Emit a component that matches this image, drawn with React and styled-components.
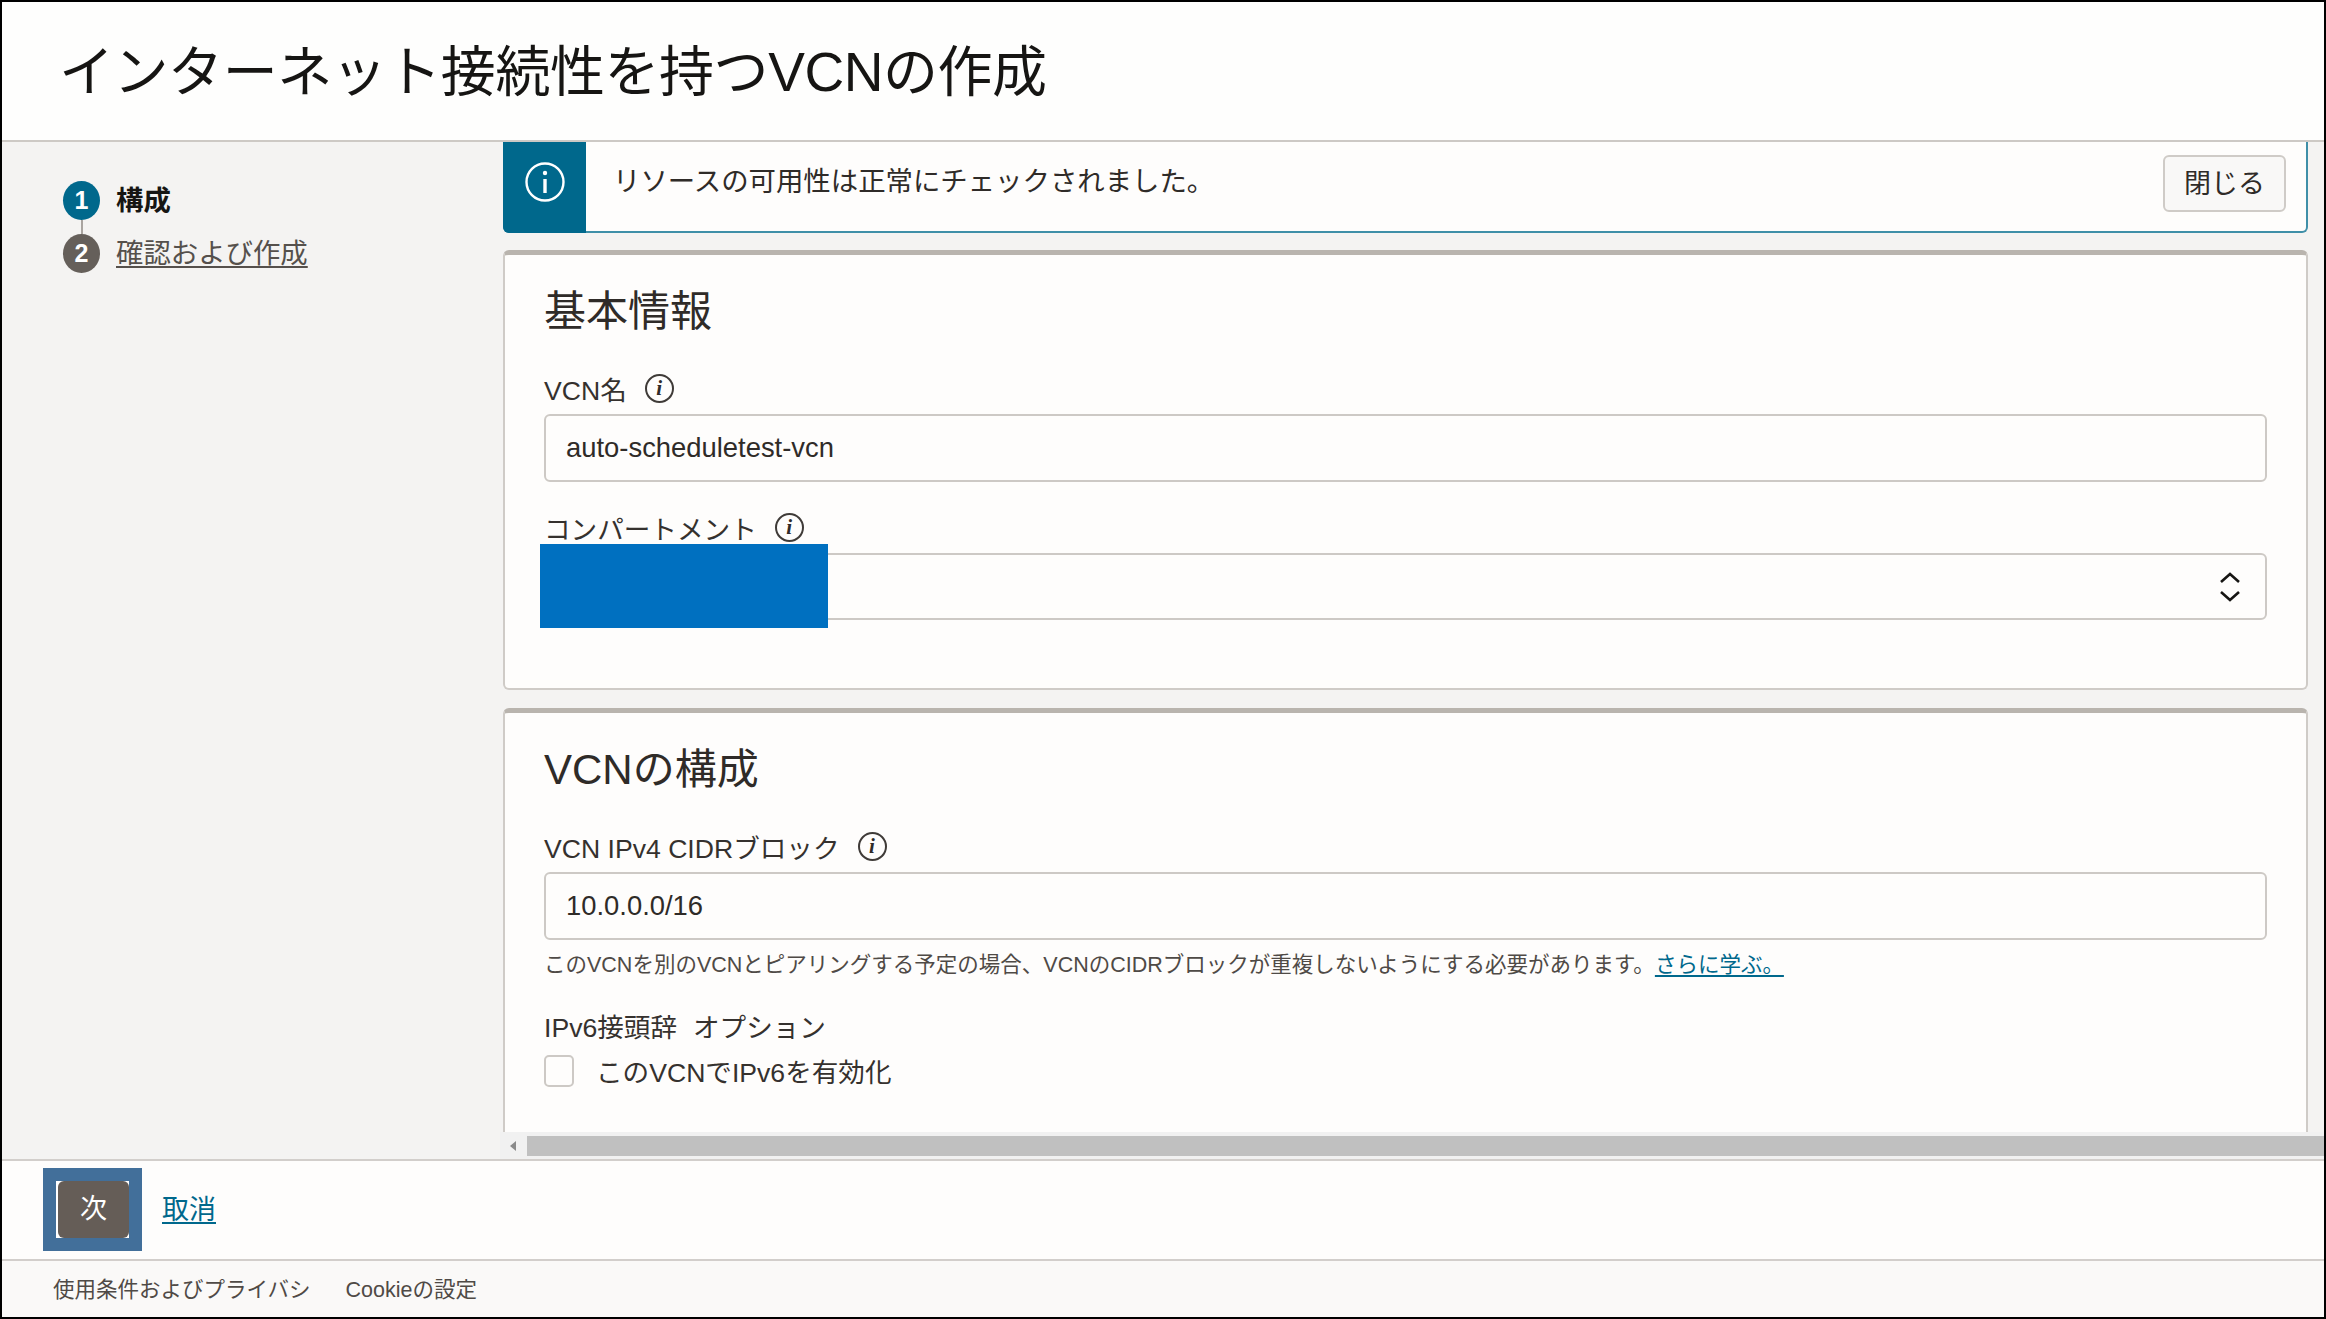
import React from "react";
import styled, { createGlobalStyle } from "styled-components";

const GlobalStyle = createGlobalStyle`
  * { box-sizing: border-box; }
  html, body { margin: 0; padding: 0; background: #000; }
  body {
    font-family: "Liberation Sans", "Noto Sans CJK JP", sans-serif;
    color: #2f2b28;
  }
`;

const Frame = styled.div`
  display: flex;
  flex-direction: column;
  width: 2326px;
  height: 1319px;
  border: 2px solid #000;
  background: #f4f3f2;
  overflow: hidden;
`;

const Header = styled.header`
  flex: none;
  display: flex;
  align-items: center;
  height: 140px;
  padding: 0 0 8px 57px;
  background: #fefefd;
  border-bottom: 2px solid #cdc9c5;
`;

const Title = styled.h1`
  margin: 0;
  font-size: 55px;
  font-weight: 400;
  color: #161513;
  letter-spacing: -0.45px;
`;

const Body = styled.div`
  flex: 1;
  min-height: 0;
  display: flex;
`;

const Sidebar = styled.nav`
  flex: none;
  width: 498px;
  padding: 39px 0 0 61px;
`;

const Step = styled.div`
  display: flex;
  align-items: center;
  gap: 16px;
  height: 39px;
`;

const StepNumber = styled.span`
  display: flex;
  align-items: center;
  justify-content: center;
  width: 37px;
  height: 39px;
  border-radius: 50%;
  font-size: 25px;
  font-weight: 700;
  color: #fff;
  background: ${(props) => (props.$active ? "#00688c" : "#655f5a")};
`;

const StepLabel = styled.a`
  margin-top: -5px;
  font-size: 27.4px;
  font-weight: ${(props) => (props.$active ? 700 : 400)};
  color: ${(props) => (props.$active ? "#161513" : "#55504c")};
  text-decoration: ${(props) => (props.$active ? "none" : "underline")};
  text-underline-offset: 3px;
`;

const StepLine = styled.div`
  width: 2px;
  height: 14px;
  margin-left: 18px;
  background: #a9a4a0;
`;

const Main = styled.main`
  flex: 1;
  min-width: 0;
  display: flex;
  flex-direction: column;
`;

const Scroller = styled.div`
  flex: 1;
  min-height: 0;
  display: flex;
  flex-direction: column;
  gap: 18px;
  padding: 0 16px 0 3px;
  overflow: hidden;
`;

const Notice = styled.div`
  flex: none;
  display: flex;
  align-items: stretch;
  height: 91px;
  margin-bottom: -1px;
  background: #fefdfc;
  border: 2px solid #3f8fa8;
  border-top: 0;
  border-radius: 0 0 6px 6px;
`;

const NoticeIcon = styled.div`
  flex: none;
  display: flex;
  align-items: flex-start;
  justify-content: center;
  width: 83px;
  margin: 0 0 -2px -2px;
  padding-top: 19px;
  background: #00688c;
  border-radius: 0 0 0 6px;
`;

const NoticeText = styled.div`
  flex: 1;
  padding: 21px 0 0 27px;
  font-size: 27.4px;
  line-height: 38px;
  color: #2f2b28;
`;

const CloseButton = styled.button`
  flex: none;
  width: 123px;
  height: 57px;
  margin: 13px 20px 0 0;
  padding: 0 0 5px;
  font: inherit;
  font-size: 27px;
  color: #2f2b28;
  background: #f9f8f7;
  border: 2px solid #cfcbc7;
  border-radius: 6px;
`;

const Card = styled.section`
  flex: none;
  padding: 27px 39px 68px;
  background: #fefdfc;
  border: 2px solid #cfcbc7;
  border-top: 5px solid #b9b4ae;
  border-radius: 6px;
`;

const CardTitle = styled.h2`
  margin: 0 0 28px;
  font-size: 42px;
  font-weight: 400;
  line-height: 60px;
  color: #2f2b28;
`;

const Label = styled.div`
  display: flex;
  align-items: center;
  gap: 18px;
  height: 36px;
  margin-bottom: 8px;
  font-size: 26.6px;
  color: #35312e;
`;

const Optional = styled.span`
  margin-left: -2px;
`;

const InfoBadge = styled.span`
  display: inline-flex;
  align-items: center;
  justify-content: center;
  width: 29px;
  height: 29px;
  border: 2px solid #3f3b38;
  border-radius: 50%;
  font-family: "Liberation Serif", serif;
  font-size: 21px;
  font-style: italic;
  font-weight: 700;
  color: #2f2b28;
`;

const TextInput = styled.input`
  display: block;
  width: 100%;
  height: 68px;
  margin-bottom: ${(props) => props.$gap || 0}px;
  padding: 0 20px;
  font-family: inherit;
  font-size: 27.4px;
  color: #2f2b28;
  background: #fefdfc;
  border: 2px solid #cdc9c5;
  border-radius: 6px;
  outline: none;
`;

const SelectField = styled.div`
  position: relative;
  display: flex;
  align-items: center;
  justify-content: flex-end;
  height: 67px;
  padding-right: 24px;
  border: 2px solid #cdc9c5;
  border-radius: 6px;
`;

const Redaction = styled.div`
  position: absolute;
  top: -11px;
  left: -6px;
  width: 288px;
  height: 84px;
  background: #0070c0;
`;

const Help = styled.p`
  margin: 8px 0 25px;
  font-size: 21.5px;
  line-height: 34px;
  color: #4f4a46;
`;

const TextLink = styled.a`
  color: #00688c;
  text-decoration: underline;
  text-underline-offset: 3px;
`;

const CheckRow = styled.label`
  display: flex;
  align-items: center;
  gap: 22px;
  margin-top: 7px;
  font-size: 26.6px;
  color: #35312e;
`;

const CheckBox = styled.input`
  appearance: none;
  flex: none;
  width: 30px;
  height: 32px;
  margin: 0;
  background: #fefdfc;
  border: 2px solid #cdc9c5;
  border-radius: 5px;
`;

const ScrollTrack = styled.div`
  flex: none;
  display: flex;
  align-items: center;
  gap: 11px;
  height: 27px;
  padding: 1px 0 0 10px;
  background: #f1f1f1;
`;

const ScrollArrow = styled.span`
  flex: none;
  width: 0;
  height: 0;
  border-top: 5px solid transparent;
  border-bottom: 5px solid transparent;
  border-right: 6px solid #8a8a8a;
`;

const ScrollThumb = styled.div`
  flex: 1;
  height: 20px;
  background: #c0c0c0;
`;

const ActionBar = styled.div`
  flex: none;
  display: flex;
  align-items: center;
  gap: 20px;
  height: 102px;
  padding: 0 0 2px 41px;
  background: #fefdfc;
  border-top: 2px solid #d2cecb;
  border-bottom: 2px solid #d2cecb;
`;

const FocusRing = styled.div`
  display: flex;
  align-items: center;
  justify-content: center;
  width: 99px;
  height: 83px;
  background: #426f9a;
`;

const NextCorners = styled.div`
  display: flex;
  width: 73px;
  height: 57px;
  padding-left: 2px;
  background: #fff;
`;

const NextButton = styled.button`
  flex: 1;
  padding: 0 0 5px;
  font: inherit;
  font-size: 27px;
  color: #fff;
  background: #655d57;
  border: 0;
  border-radius: 6px;
`;

const CancelLink = styled(TextLink)`
  margin-bottom: 4px;
  font-size: 27px;
`;

const LegalBar = styled.footer`
  flex: none;
  display: flex;
  align-items: center;
  gap: 35px;
  height: 56px;
  padding: 0 0 3px 51px;
  font-size: 21.5px;
  color: #4f4a46;
  background: #faf9f8;
`;

const InfoIcon = () => (
  <svg width="42" height="42" viewBox="0 0 42 42" fill="none" stroke="#fff">
    <circle cx="21" cy="21" r="18.5" strokeWidth="2.4" />
    <path d="M21 18v14" strokeWidth="3.4" />
    <circle cx="21" cy="12" r="2.2" fill="#fff" stroke="none" />
  </svg>
);

const UpDownIcon = () => (
  <svg width="22" height="30" viewBox="0 0 22 30" fill="none" stroke="#161513" strokeWidth="2.6">
    <path d="M2 10l9-8 9 8" />
    <path d="M2 20l9 8 9-8" />
  </svg>
);

const App = () => {
  return (
    <>
      <GlobalStyle />
      <Frame>
        <Header>
          <Title>インターネット接続性を持つVCNの作成</Title>
        </Header>
        <Body>
          <Sidebar>
            <Step>
              <StepNumber $active>1</StepNumber>
              <StepLabel $active>構成</StepLabel>
            </Step>
            <StepLine />
            <Step>
              <StepNumber>2</StepNumber>
              <StepLabel href="#">確認および作成</StepLabel>
            </Step>
          </Sidebar>
          <Main>
            <Scroller>
              <Notice>
                <NoticeIcon>
                  <InfoIcon />
                </NoticeIcon>
                <NoticeText>リソースの可用性は正常にチェックされました。</NoticeText>
                <CloseButton>閉じる</CloseButton>
              </Notice>
              <Card>
                <CardTitle>基本情報</CardTitle>
                <Label>
                  VCN名 <InfoBadge>i</InfoBadge>
                </Label>
                <TextInput defaultValue="auto-scheduletest-vcn" $gap={27} />
                <Label>
                  コンパートメント <InfoBadge>i</InfoBadge>
                </Label>
                <SelectField>
                  <Redaction />
                  <UpDownIcon />
                </SelectField>
              </Card>
              <Card>
                <CardTitle>VCNの構成</CardTitle>
                <Label>
                  VCN IPv4 CIDRブロック <InfoBadge>i</InfoBadge>
                </Label>
                <TextInput defaultValue="10.0.0.0/16" />
                <Help>
                  このVCNを別のVCNとピアリングする予定の場合、VCNのCIDRブロックが重複しないようにする必要があります。
                  <TextLink href="#">さらに学ぶ。</TextLink>
                </Help>
                <Label>
                  IPv6接頭辞 <Optional>オプション</Optional>
                </Label>
                <CheckRow>
                  <CheckBox type="checkbox" />
                  このVCNでIPv6を有効化
                </CheckRow>
              </Card>
            </Scroller>
            <ScrollTrack>
              <ScrollArrow />
              <ScrollThumb />
            </ScrollTrack>
          </Main>
        </Body>
        <ActionBar>
          <FocusRing>
            <NextCorners>
              <NextButton>次</NextButton>
            </NextCorners>
          </FocusRing>
          <CancelLink href="#">取消</CancelLink>
        </ActionBar>
        <LegalBar>
          <span>使用条件およびプライバシ</span>
          <span>Cookieの設定</span>
        </LegalBar>
      </Frame>
    </>
  );
};

export default App;
